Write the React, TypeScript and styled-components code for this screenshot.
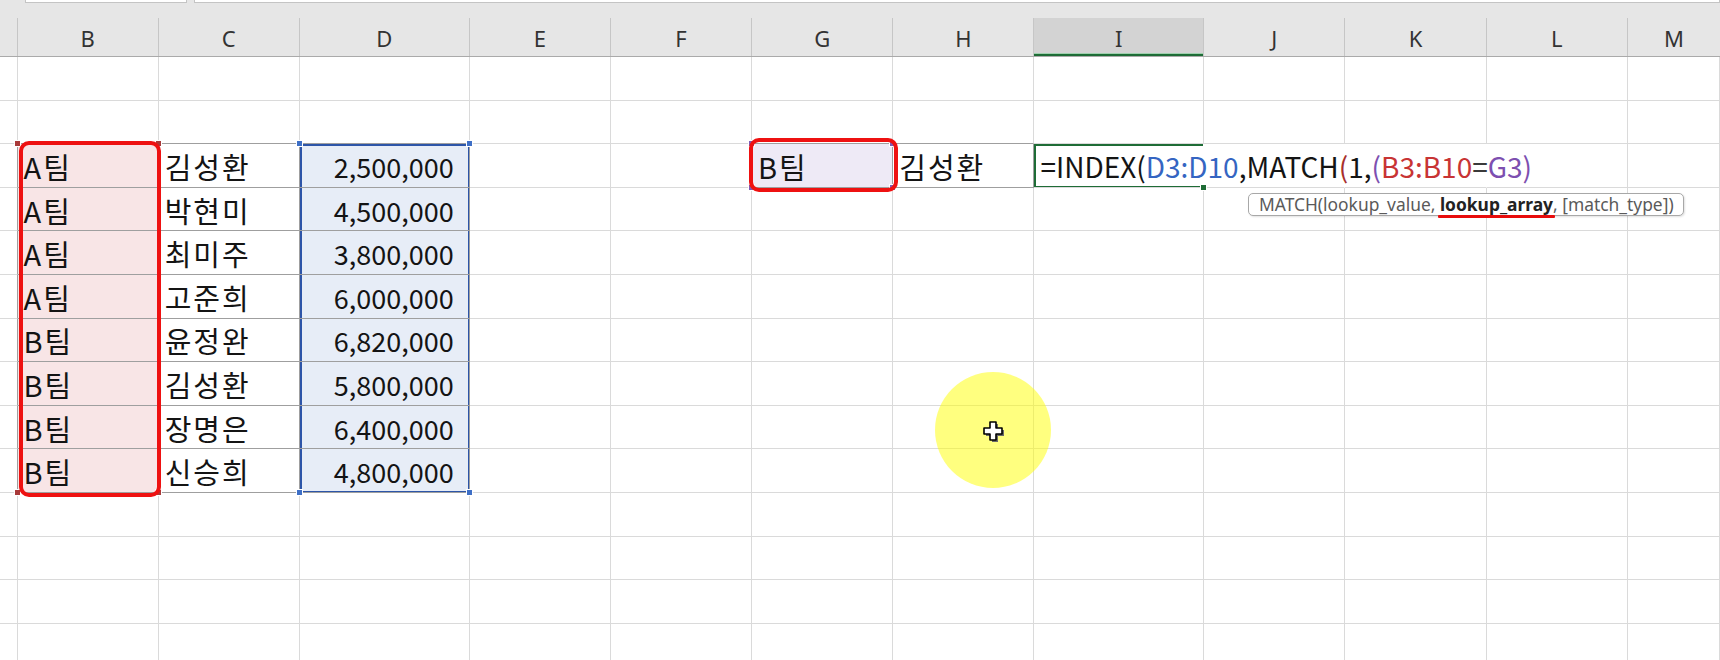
import React from "react";
import styled, { createGlobalStyle } from "styled-components";

const GlobalStyle = createGlobalStyle`
  html, body { margin: 0; padding: 0; background: #fff; overflow: hidden; }
  body { font-family: "Noto Sans CJK KR", "Noto Sans", sans-serif; }
`;

const STD = 141.2;
const WIDE = 169.8;
const COLS: { key: string; w: number | null }[] = [
  { key: "A", w: 17.5 },
  { key: "B", w: STD },
  { key: "C", w: STD },
  { key: "D", w: WIDE },
  { key: "E", w: STD },
  { key: "F", w: STD },
  { key: "G", w: STD },
  { key: "H", w: STD },
  { key: "I", w: WIDE },
  { key: "J", w: STD },
  { key: "K", w: STD },
  { key: "L", w: STD },
  { key: "M", w: null },
];
const TEMPLATE = COLS.map((c) => (c.w ? `${c.w}px` : "minmax(0,1fr)")).join(" ");
const ROW_COUNT = 14;
const ROW_H = 43.6;

const LIGHT = "#dadada";
const DARK = "#9f9f9f";
const BLUE = "#2d55a8";
const GREEN = "#1e6c36";

const Page = styled.div`
  position: relative;
  width: 1720px;
  height: 660px;
  overflow: hidden;
  background: #fff;
`;

const TopStrip = styled.div`
  height: 18px;
  display: flex;
  align-items: flex-start;
  gap: 7px;
  padding-left: 25px;
  background: #e6e6e6;
`;

const BarBox = styled.div<{ $w?: number }>`
  box-sizing: border-box;
  height: 3px;
  ${(p) => (p.$w ? `width: ${p.$w}px;` : "flex: 1;")}
  background: #fff;
  border: 1px solid #c4c4c4;
  border-top: none;
`;

const HeaderRow = styled.div`
  display: grid;
  grid-template-columns: ${TEMPLATE};
  height: 39px;
  box-sizing: border-box;
  background: #e6e6e6;
  border-bottom: 1px solid #aaaaaa;
`;

const HeaderCell = styled.div<{ $active?: boolean; $last?: boolean }>`
  display: flex;
  align-items: center;
  justify-content: center;
  border-right: ${(p) => (p.$last ? "none" : "1px solid #c6c6c6")};
  background: ${(p) => (p.$active ? "#d3d3d3" : "transparent")};
  box-shadow: ${(p) => (p.$active ? `inset 0 -2px 0 ${GREEN}, inset 0 -3px 0 #9fd0ae` : "none")};
  font-family: "Noto Sans", "Open Sans", sans-serif;
  font-size: 22px;
  color: #333;
  padding-top: 2px;
`;

const Grid = styled.div`
  display: grid;
  grid-template-columns: ${TEMPLATE};
  grid-auto-rows: ${ROW_H}px;
`;

const Cell = styled.div<{
  $right: string;
  $bottom: string;
  $fill?: string;
  $shadow?: string;
  $align?: "left" | "right";
}>`
  position: relative;
  box-sizing: border-box;
  display: flex;
  align-items: center;
  justify-content: ${(p) => (p.$align === "right" ? "flex-end" : "flex-start")};
  padding: ${(p) => (p.$align === "right" ? "2px 15px 0 0" : "2px 0 0 6px")};
  border-right: 1px solid ${(p) => p.$right};
  border-bottom: 1px solid ${(p) => p.$bottom};
  background: ${(p) => p.$fill ?? "transparent"};
  box-shadow: ${(p) => p.$shadow ?? "none"};
  font-size: ${(p) => (p.$align === "right" ? "27px" : "29px")};
  letter-spacing: ${(p) => (p.$align === "right" ? "0" : "2px")};
  line-height: 1;
  color: #141414;
  white-space: nowrap;
`;

const Overflow = styled.span`
  position: relative;
  z-index: 2;
  font-size: 28px;
  letter-spacing: 0;
`;

const Ref = styled.span<{ $c: string }>`
  color: ${(p) => p.$c};
`;

const Handle = styled.span<{ $x: "l" | "r"; $y: "t" | "b"; $c: string }>`
  position: absolute;
  z-index: 3;
  width: 5px;
  height: 5px;
  background: ${(p) => p.$c};
  border: 1px solid #fff;
  ${(p) => (p.$x === "l" ? "left: -4px;" : "right: -4px;")}
  ${(p) => (p.$y === "t" ? "top: -4px;" : "bottom: -4px;")}
`;

/* red hand-drawn marker boxes, anchored to the top-left cell they surround */
const Marker = styled.span<{ $rows: number; $dx: number; $dy: number; $dw: number; $dh: number }>`
  position: absolute;
  z-index: 4;
  left: ${(p) => p.$dx}px;
  top: ${(p) => p.$dy}px;
  width: calc(100% + ${(p) => p.$dw}px);
  height: ${(p) => p.$rows * ROW_H + p.$dh}px;
  box-sizing: border-box;
  border: 4px solid #ee1111;
  border-radius: 10px;
  pointer-events: none;
`;

const Tooltip = styled.div`
  position: absolute;
  z-index: 5;
  left: 1248px;
  top: 193px;
  width: 436px;
  height: 23px;
  box-sizing: border-box;
  display: flex;
  align-items: center;
  padding-left: 10px;
  background: #fff;
  border: 1px solid #a8a8a8;
  border-radius: 5px;
  box-shadow: 1px 1px 2px rgba(0, 0, 0, 0.12);
  font-family: "Noto Sans", "Open Sans", sans-serif;
  font-size: 17.4px;
  line-height: 1;
  color: #5a5a5a;
  white-space: nowrap;
`;

const Bold = styled.span`
  position: relative;
  font-weight: 700;
  color: #222;
  &::after {
    content: "";
    position: absolute;
    left: -2px;
    right: -2px;
    bottom: -5px;
    height: 3px;
    background: #e80c0c;
    border-radius: 1px;
  }
`;

const Spot = styled.div`
  position: absolute;
  z-index: 7;
  left: ${993 - 58}px;
  top: ${430 - 58}px;
  width: 116px;
  height: 116px;
  border-radius: 50%;
  background: rgba(255, 255, 0, 0.5);
  display: flex;
  align-items: center;
  justify-content: center;
`;

const Cursor = styled.svg`
  margin: 4px 0 0 2px;
`;

type CellData = { text?: React.ReactNode; align?: "left" | "right" };

const rows3to10: [string, string, string][] = [
  ["A팀", "김성환", "2,500,000"],
  ["A팀", "박현미", "4,500,000"],
  ["A팀", "최미주", "3,800,000"],
  ["A팀", "고준희", "6,000,000"],
  ["B팀", "윤정완", "6,820,000"],
  ["B팀", "김성환", "5,800,000"],
  ["B팀", "장명은", "6,400,000"],
  ["B팀", "신승희", "4,800,000"],
];

const formula = (
  <Overflow>
    =INDEX(<Ref $c="#3565c2">D3:D10</Ref>,MATCH<Ref $c="#a8302c">(</Ref>1,
    <Ref $c="#7d4fb0">(</Ref>
    <Ref $c="#c83434">B3:B10</Ref>
    <Ref $c="#3a3a3a">=</Ref>
    <Ref $c="#7d4fb0">G3)</Ref>
  </Overflow>
);

const data: Record<string, CellData> = {};
rows3to10.forEach(([t, n, v], i) => {
  const r = i + 3;
  data[`B${r}`] = { text: t };
  data[`C${r}`] = { text: n };
  data[`D${r}`] = { text: v, align: "right" };
});
data["G3"] = { text: "B팀" };
data["H3"] = { text: "김성환" };
data["I3"] = { text: formula };

const isBoxed = (r: number, ci: number) =>
  (ci >= 1 && ci <= 3 && r >= 3 && r <= 10) || (r === 3 && (ci === 6 || ci === 7));

const fillOf = (r: number, key: string) => {
  if (key === "B" && r >= 3 && r <= 10) return "#f8e5e6";
  if (key === "D" && r >= 3 && r <= 10) return "#e7edf7";
  if (key === "G" && r === 3) return "#eeeaf6";
  return undefined;
};

const shadowOf = (r: number, key: string) => {
  if (key === "D" && r >= 3 && r <= 10) {
    const s = [`inset 2px 0 0 ${BLUE}`, `inset -1px 0 0 ${BLUE}`];
    if (r === 3) s.push(`inset 0 2px 0 ${BLUE}`);
    if (r === 10) s.push(`inset 0 -1px 0 ${BLUE}`);
    return s.join(", ");
  }
  if (key === "I" && r === 3) {
    return `inset 0 2px 0 ${GREEN}, inset 2px 0 0 ${GREEN}, inset 0 -1px 0 ${GREEN}`;
  }
  return undefined;
};

type H = { x: "l" | "r"; y: "t" | "b"; c: string };
const handlesOf = (r: number, key: string): H[] => {
  const out: H[] = [];
  const red = "#a83a3a";
  const blue = "#3e6fc6";
  const purple = "#7e5bb5";
  if (key === "B" && r === 3) out.push({ x: "l", y: "t", c: red }, { x: "r", y: "t", c: red });
  if (key === "B" && r === 10) out.push({ x: "l", y: "b", c: red }, { x: "r", y: "b", c: red });
  if (key === "D" && r === 3) out.push({ x: "l", y: "t", c: blue }, { x: "r", y: "t", c: blue });
  if (key === "D" && r === 10) out.push({ x: "l", y: "b", c: blue }, { x: "r", y: "b", c: blue });
  if (key === "G" && r === 3)
    out.push(
      { x: "l", y: "t", c: purple },
      { x: "r", y: "t", c: purple },
      { x: "l", y: "b", c: purple },
      { x: "r", y: "b", c: purple }
    );
  if (key === "I" && r === 3) out.push({ x: "r", y: "b", c: GREEN });
  return out;
};

export default function App() {
  const cells: React.ReactNode[] = [];
  for (let r = 1; r <= ROW_COUNT; r++) {
    COLS.forEach((col, ci) => {
      const key = col.key;
      const d = data[`${key}${r}`];
      const noRight = r === 3 && (key === "I" || key === "J" || key === "K");
      const right = noRight
        ? "transparent"
        : isBoxed(r, ci) || isBoxed(r, ci + 1)
        ? DARK
        : LIGHT;
      const bottom = isBoxed(r, ci) || isBoxed(r + 1, ci) ? DARK : LIGHT;
      cells.push(
        <Cell
          key={`${key}${r}`}
          $right={right}
          $bottom={bottom}
          $fill={fillOf(r, key)}
          $shadow={shadowOf(r, key)}
          $align={d?.align}
        >
          {d?.text}
          {handlesOf(r, key).map((h, i) => (
            <Handle key={i} $x={h.x} $y={h.y} $c={h.c} />
          ))}
          {key === "B" && r === 3 && <Marker $rows={8} $dx={1} $dy={-3} $dw={2} $dh={7} />}
          {key === "G" && r === 3 && <Marker $rows={1} $dx={-3} $dy={-6} $dw={9} $dh={10} />}
        </Cell>
      );
    });
  }

  return (
    <Page>
      <GlobalStyle />
      <TopStrip>
        <BarBox $w={162} />
        <BarBox />
      </TopStrip>
      <HeaderRow>
        {COLS.map((c, i) => (
          <HeaderCell key={c.key} $active={c.key === "I"} $last={i === COLS.length - 1}>
            {c.key === "A" ? "" : c.key}
          </HeaderCell>
        ))}
      </HeaderRow>
      <Grid>{cells}</Grid>

      <Tooltip>
        MATCH(lookup_value,&nbsp;<Bold>lookup_array</Bold>, [match_type])
      </Tooltip>

      <Spot>
        <Cursor width="24" height="24" viewBox="0 0 24 24">
          <path
            d="M8 2 H14 V8 H20 V14 H14 V20 H8 V14 H2 V8 H8 Z"
            transform="translate(2 2)"
            fill="#6a6a6a"
          />
          <path
            d="M8 2 H14 V8 H20 V14 H14 V20 H8 V14 H2 V8 H8 Z"
            fill="#fff"
            stroke="#000"
            strokeWidth="1.6"
            strokeLinejoin="round"
          />
        </Cursor>
      </Spot>
    </Page>
  );
}
